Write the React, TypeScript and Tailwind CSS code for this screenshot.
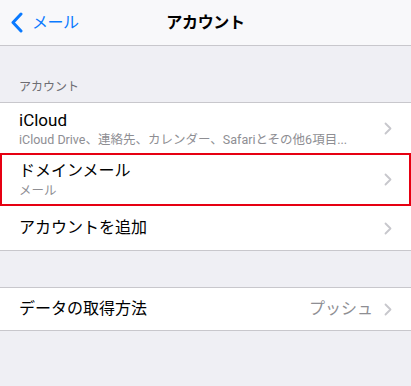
const font = { fontFamily: 'Roboto, "Noto Sans CJK JP", sans-serif' };

function Chevron() {
  return (
    <svg width="8" height="13" viewBox="0 0 8 13" fill="none" className="shrink-0">
      <path d="M1.5 1.5L6.5 6.5L1.5 11.5" stroke="#c7c7cc" strokeWidth="1.8" strokeLinecap="round" strokeLinejoin="round" />
    </svg>
  );
}

export default function App() {
  return (
    <div className="w-[411px] h-[386px] bg-[#efeff4] overflow-hidden text-black" style={font}>
      {/* Nav bar */}
      <div className="relative h-[46px] bg-[#f8f8fa] border-b border-[#c8c7cc] flex items-center justify-center">
        <div className="absolute left-[11px] top-0 h-full flex items-center gap-[9px] text-[#0a7aff]">
          <svg width="12" height="21" viewBox="0 0 12 21" fill="none">
            <path d="M10 2L2 10.5L10 19" stroke="#0a7aff" strokeWidth="3" strokeLinecap="round" strokeLinejoin="round" />
          </svg>
          <span className="text-[16px] tracking-[-0.5px]">メール</span>
        </div>
        <span className="text-[16px] font-semibold tracking-[-0.3px]">アカウント</span>
      </div>

      {/* Section header */}
      <div className="h-[56px] flex items-end pl-[19px] pb-[6px]">
        <span className="text-[12px] text-[#6d6d72]">アカウント</span>
      </div>

      {/* Group 1 */}
      <div className="bg-white border-t border-b border-[#c8c7cc]">
        <div className="h-[50px] flex items-center pl-[19px] pr-[19px]">
          <div className="flex-1 flex flex-col">
            <span className="text-[17px] leading-[22px] pt-[2px]">iCloud</span>
            <span className="text-[12.5px] leading-[18px] text-[#8e8e93]">iCloud Drive、連絡先、カレンダー、Safariとその他6項目...</span>
          </div>
          <Chevron />
        </div>
        <div className="h-[53px] flex items-center pl-[17px] pr-[17px] border-[2px] border-[#e60012]">
          <div className="flex-1 flex flex-col">
            <span className="text-[16px] leading-[22px]">ドメインメール</span>
            <span className="text-[12.5px] leading-[18px] text-[#8e8e93]">メール</span>
          </div>
          <Chevron />
        </div>
        <div className="h-[44px] flex items-center pl-[19px] pr-[19px]">
          <span className="flex-1 text-[16px]">アカウントを追加</span>
          <Chevron />
        </div>
      </div>

      <div className="h-[36px]" />

      {/* Group 2 */}
      <div className="bg-white border-t border-b border-[#c8c7cc]">
        <div className="h-[42px] flex items-center pl-[19px] pr-[19px]">
          <span className="flex-1 text-[16px]">データの取得方法</span>
          <span className="text-[16px] text-[#8e8e93] mr-[11px]">プッシュ</span>
          <Chevron />
        </div>
      </div>
    </div>
  );
}
